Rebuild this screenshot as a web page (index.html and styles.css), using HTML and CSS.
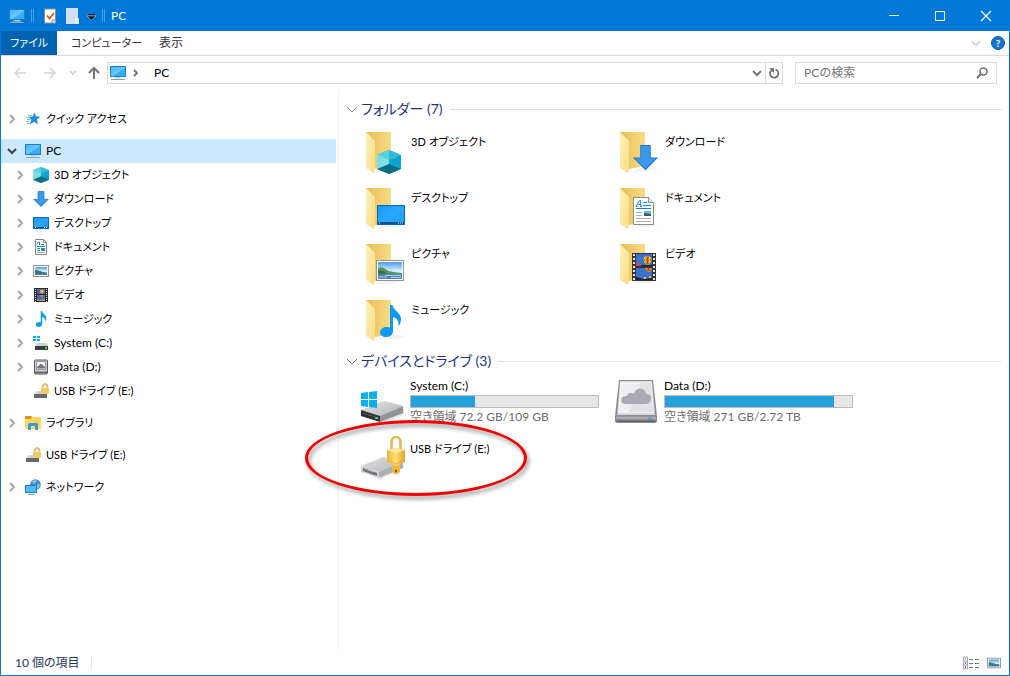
FILE: index.html
```html
<!DOCTYPE html>
<html lang="ja">
<head>
<meta charset="utf-8">
<meta name="viewport" content="width=device-width, initial-scale=1">
<title>PC</title>
<link rel="stylesheet" href="styles.css">
</head>
<body>
<svg class="defs" width="0" height="0" aria-hidden="true">
  <defs>
    <linearGradient id="g-screen" x1="0" y1="0" x2="1" y2="1"><stop offset="0" stop-color="#3fb4ff"/><stop offset=".55" stop-color="#6cc8ff"/><stop offset=".56" stop-color="#38acf8"/><stop offset="1" stop-color="#38acf8"/></linearGradient>
    <linearGradient id="g-desk" x1="0" y1="0" x2="1" y2="1"><stop offset="0" stop-color="#149bff"/><stop offset=".5" stop-color="#2aa6ff"/><stop offset="1" stop-color="#1b9bfa"/></linearGradient>
    <linearGradient id="g-back" x1="0" y1="0" x2="1" y2="0"><stop offset="0" stop-color="#e9bf55"/><stop offset="1" stop-color="#f7dc86"/></linearGradient>
    <linearGradient id="g-flap" x1="0" y1="0" x2="1" y2="1"><stop offset="0" stop-color="#fff0bd"/><stop offset="1" stop-color="#fbdc83"/></linearGradient>
    <linearGradient id="g-sky" x1="0" y1="0" x2="0" y2="1"><stop offset="0" stop-color="#4d9be8"/><stop offset=".5" stop-color="#d3ecfa"/><stop offset="1" stop-color="#e7f4fa"/></linearGradient>
    <linearGradient id="g-metal" x1="0" y1="0" x2="1" y2="1"><stop offset="0" stop-color="#e2e2e4"/><stop offset="1" stop-color="#b4b5b8"/></linearGradient>
    <linearGradient id="g-gold" x1="0" y1="0" x2="1" y2="0"><stop offset="0" stop-color="#e8b63e"/><stop offset=".45" stop-color="#ffdc78"/><stop offset="1" stop-color="#e3a72c"/></linearGradient>
    <linearGradient id="g-base" x1="0" y1="0" x2="0" y2="1"><stop offset="0" stop-color="#85858a"/><stop offset=".3" stop-color="#b8b8bd"/><stop offset="1" stop-color="#55555a"/></linearGradient>
    <symbol id="i-pc" viewBox="0 0 16 16">
      <rect x=".5" y="1.5" width="15" height="10" fill="url(#g-screen)" stroke="#1f7fb8"/>
      <rect x="6" y="12" width="4" height="1" fill="#9fc9de"/><path d="M1 14.5h14" stroke="#8fa5b2"/><path d="M4 13h8" stroke="#c3d9e4"/>
    </symbol>
    <symbol id="i-star" viewBox="0 0 16 16">
      <path d="M9.600 2l1.200 3.700 4 .2-3.200 2.500.9 4.400-3.200-2.400-4.200 2.500 1.700-4.200L3.700 6.200l4.200-.4z" fill="#1d8fe0" stroke="#1478c4" stroke-width=".5"/>
      <path d="M3 4.500h4M1.500 6.500h3M2 8.500h3M1 10.500h3M2 12.500h2" stroke="#6cc2f3"/>
    </symbol>
    <symbol id="i-cube" viewBox="0 0 24 24">
      <path d="M0 5l12-5 12 5v14l-12 5-12-5z" fill="#12a6c4"/><path d="M0 5l12-5 12 5-12 5z" fill="#59d3e2"/><path d="M0 5l12 5v14L0 19z" fill="#9ce8ec"/><path d="M0 5l12 5v4L0 19z" fill="#80dfe6"/><path d="M12 10l12-5v14l-12-5z" fill="#0aa5d0"/><path d="M0 19l12-5 12 5-12 5z" fill="#0a6e86"/><path d="M12 0L24 5l-12 5z" fill="#35bbd2"/>
    </symbol>
    <symbol id="i-down" viewBox="0 0 24 24"><path d="M7.500.5h9v12h6.500L12 23.500 1 12.500h6.500z" fill="#3b99ea" stroke="#2176c4"/></symbol>
    <symbol id="i-desk" viewBox="0 0 28 20"><rect x=".5" y=".5" width="27" height="19" fill="url(#g-desk)" stroke="#0b67ad"/><path d="M1 18h26" stroke="#07548f" stroke-width="2"/><path d="M2 18h1M21 18h1M23 18h1M25 18h1" stroke="#e9f6ff"/></symbol>
    <symbol id="i-desk-s" viewBox="0 0 16 16"><rect x=".5" y="2.500" width="15" height="11" fill="url(#g-desk)" stroke="#0b67ad"/><path d="M1 12.500h14" stroke="#07548f"/><path d="M2 12.500h1M11 12.500h1M13 12.500h1" stroke="#e9f6ff"/></symbol>
    <symbol id="i-doc" viewBox="0 0 21 28">
      <path d="M.5.500h15l5 5v22H.5z" fill="#fff" stroke="#8d8d8d"/><path d="M15.500.500v5h5" fill="#eee" stroke="#8d8d8d"/>
      <path d="M3 9.500L6.500 3.500h1L8 9.500M5 7.500h3M2.500 9.500h2M7 9.500h2" fill="none" stroke="#1687cf"/><path d="M10 5.500h4M10 8.500h8M3 11.500h15" stroke="#1687cf"/><path d="M3 15.500h6M3 18.500h6M3 21.500h15M3 24.500h15" stroke="#b0b0b0"/><rect x="11" y="14" width="7" height="5" fill="#78b4e4"/><path d="M11 16l7 1v2h-7z" fill="#315f70"/>
    </symbol>
    <symbol id="i-doc-s" viewBox="0 0 16 16"><path d="M2.500.500h8l3 3v12h-11z" fill="#fff" stroke="#858585"/><path d="M10.500.500v3h3" fill="none" stroke="#858585"/><path d="M4 5.500L5.500 3h1v3M4 7.500h8" fill="none" stroke="#1687cf"/><path d="M8 5.500h3M4 9.500h3M4 11.500h3" stroke="#1687cf"/><path d="M4 13.500h8" stroke="#999"/><rect x="8" y="9" width="4" height="3" fill="#3a83aa"/></symbol>
    <symbol id="i-pic" viewBox="0 0 28 21">
      <rect x=".5" y=".5" width="27" height="20" fill="#fff" stroke="#949494"/><rect x="2" y="2" width="24" height="17" fill="url(#g-sky)"/><path d="M2 8c4-2 6 0 9 2s9 2 15 3v2H2z" fill="#5c9564"/><path d="M2 10c4 0 7 2 10 4H2z" fill="#3c7449"/><path d="M2 14h24v5H2z" fill="#4f86b4"/><path d="M3 17h8M9 15.500h16M15 17.500h10" stroke="#a9cfe6" fill="none"/>
    </symbol>
    <symbol id="i-pic-s" viewBox="0 0 16 16"><rect x=".5" y="2.500" width="15" height="11" fill="#fff" stroke="#949494"/><rect x="2" y="4" width="12" height="8" fill="url(#g-sky)"/><path d="M2 7c3 0 6 2 12 2.500V11H2z" fill="#3c7661"/><path d="M2 10h12v2H2z" fill="#3f7ead"/></symbol>
    <symbol id="i-film" viewBox="0 0 24 28">
      <rect width="24" height="28" fill="#333"/><path d="M2 1v27M22 1v27" stroke="#e4e4e4" stroke-width="2" stroke-dasharray="2 2"/><rect x="4" y="1" width="16" height="12" fill="#3a70cf"/><rect x="4" y="15" width="16" height="12" fill="#3a70cf"/>
      <path d="M4 9l3 1 3 2v1H4z" fill="#be4d68"/><path d="M9 12h11v1H9z" fill="#182435"/><path d="M11.500 7a4 4 0 018 0q0 2-3 5h-2q-3-3-3-5z" fill="#efbf1f"/><path d="M15.500 3.500v8" stroke="#bd3b28" stroke-width="2"/><path d="M12.500 6v2M18.500 6v2" stroke="#4a952f"/><path d="M13 15h7l-2 4h-2z" fill="#e1a31e"/><path d="M16.500 15v3" stroke="#c92e2b" stroke-width="2"/><path d="M4 24l4 1 3 1 9-1v2H4z" fill="#182435"/><path d="M12 25h2M17 24h2" stroke="#f1c222" stroke-width="2"/>
    </symbol>
    <symbol id="i-film-s" viewBox="0 0 16 16"><rect x="1" y="1" width="14" height="14" fill="#292929"/><path d="M2.500 2v13M13.500 2v13" stroke="#ddd" stroke-dasharray="1 1"/><rect x="4" y="2" width="8" height="5" fill="#356dcb"/><rect x="4" y="8" width="8" height="6" fill="#356dcb"/><circle cx="9" cy="4.500" r="2" fill="#e8b128"/><path d="M7 8h4l-2 3z" fill="#db7330"/><path d="M4 12l3 1 5-1v2H4z" fill="#be9930"/><path d="M4 5h3v2H4z" fill="#b34057"/></symbol>
    <symbol id="i-note" viewBox="0 0 21 32"><path d="M10 0h2.500c.5 5 8.500 7.500 8.500 14 0 3-1 5-2.500 7.500.8-5-1.500-8.500-5.500-9.500v14c0 4-3.500 6-7 6-3.500 0-6-2-6-4.500C0 24 3.500 22 7 22c1 0 2 .2 3 .6z" fill="#0f9af0"/></symbol>
    <symbol id="i-drive-s" viewBox="0 0 16 16"><path d="M0 1h3v2H0zM4 1h3v2H4zM0 4h3v2H0zM4 4h3v2H4z" fill="#10a9e8"/><path d="M4 8h10l1 3H2z" fill="#d0d0d2"/><rect x="2" y="11" width="13" height="4" fill="#3b3e40"/><rect x="12" y="12" width="2" height="2" fill="#38d65a"/></symbol>
    <symbol id="i-data-s" viewBox="0 0 16 16"><rect x="1.500" y="1" width="13" height="14" rx="1" fill="#ccccd0" stroke="#5c5c60"/><rect x="3.500" y="2.500" width="9" height="8" fill="#efeff1" stroke="#9c9ca0"/><path d="M4 9c0-2 2-2 2-2 1-3 4-2 4 0 2 0 3 2 1 2.500H5z" fill="#73747b"/><path d="M2 13.500h12" stroke="#68686d" stroke-width="2"/></symbol>
    <symbol id="i-lock-s" viewBox="0 0 16 16"><path d="M4 8h11v3H1z" fill="#d1d1d2"/><rect x="1" y="11" width="13" height="4" fill="#66676a"/><path d="M9.500 5V3.500a2.500 2.500 0 015 0V5" fill="none" stroke="#dfb956" stroke-width="1.500"/><rect x="8" y="5" width="8" height="6" rx="1" fill="#f0cb69"/></symbol>
    <symbol id="i-lib" viewBox="0 0 16 16"><path d="M0 1h6l1 1h9v12H0z" fill="#ffd663"/><path d="M0 1h6l1 1-1 2H0z" fill="#d99b13"/><path d="M3 15V9.500Q3 8 4.500 8h7Q13 8 13 9.500V15h-3v-4H6v4z" fill="#3d98db"/></symbol>
    <symbol id="i-net" viewBox="0 0 16 16"><circle cx="10.500" cy="5.500" r="5.300" fill="#3f8fc6"/><path d="M7 3c1-2 4-2 5-1L9 5zM12 6l3-1c0 2-1 4-3 4z" fill="#8fc0dd"/><rect x=".5" y="6.500" width="11" height="7" fill="#4fbbfa" stroke="#1a80bd"/><path d="M3 15.500h7" stroke="#7a9caf"/></symbol>
    <symbol id="i-folder" viewBox="0 0 48 48"><path d="M15 44l20-1 11-3-14-2z" fill="#000" opacity=".05"/><path d="M6 4h25v34l-16 3-9-3z" fill="url(#g-back)"/><path d="M6 4l9 9v27l-1 5-8-5z" fill="url(#g-flap)"/></symbol>
    <symbol id="i-system" viewBox="0 0 48 48">
      <path d="M1 35l20-10 23 8v6l-22 8z" fill="#000" opacity=".1"/><path d="M1 34l24-9 18 5-23 10z" fill="url(#g-metal)"/><path d="M20 40l23-10v7L20 46z" fill="#929397"/><path d="M1 34l19 6v6L1 40z" fill="#2e3031"/><path d="M3 37l12 4" stroke="#595b5c"/><rect x="15" y="41" width="3" height="2" fill="#37e05e"/>
      <path d="M1 17l7-1v7H1zM9 16l8-1v8H9zM1 24h7v7l-7-1zM9 24h8v8l-8-1z" fill="#0aafec"/>
    </symbol>
    <symbol id="i-data" viewBox="0 0 48 48">
      <path d="M5 4h34l4 36v5q0 2-3 2H4q-3 0-3-2v-5z" fill="#8b8b90"/><path d="M6 5h32l3 34H3z" fill="#d9dade"/><path d="M7 7h30l2 29H5z" fill="#eeeef1" stroke="#fff"/><path d="M27 7h10l2 29H15z" fill="#e2e2e6"/><path d="M2 40h40v4q0 2-2 2H4q-2 0-2-2z" fill="url(#g-base)"/><circle cx="36" cy="43" r="1.500" fill="#70b4e9" stroke="#37678b" stroke-width=".5"/>
      <path d="M12 28c-7 0-6-9 1-8 1-4 6-3 7-2 1-7 11-7 12 0 7-1 7 10-1 10z" fill="#aaaab4"/>
    </symbol>
    <symbol id="i-usb" viewBox="0 0 48 48">
      <path d="M2 36l20-9 23 6-25 13z" fill="#000" opacity=".08"/><path d="M1 32l22-9 20 5-23 10z" fill="url(#g-metal)"/><path d="M19 38l24-10v6L19 44z" fill="#aeafb2"/><path d="M1 32l18 6v6L1 38z" fill="#d2d2d4"/><path d="M3 34l14 5v3L3 37z" fill="#707174"/><path d="M5 35l8 3" stroke="#a9a9ab"/>
      <path d="M31.500 17V8a4.500 5 0 019 0v9" fill="none" stroke="#e7ba50" stroke-width="2.600"/><path d="M32 30h8v8l-4 3-4-3z" fill="#eeb743"/><path d="M27 16l9-2 9 2v12l-9 4-9-4z" fill="url(#g-gold)"/><path d="M27 16l9-2 9 2-9 3z" fill="#ffe7a2"/><path d="M27 26l9 4 9-4" fill="none" stroke="#d9a63c" stroke-width=".7"/><circle cx="36" cy="37" r="1.200" fill="#7a5c20"/>
    </symbol>
    <symbol id="i-right" viewBox="0 0 16 16"><path d="M6 4l4 4-4 4" fill="none" stroke="currentColor" stroke-width="2"/></symbol>
    <symbol id="i-open" viewBox="0 0 16 16"><path d="M4 6l4 4 4-4" fill="none" stroke="currentColor" stroke-width="2"/></symbol>
    <symbol id="i-thin" viewBox="0 0 12 12"><path d="M1 4l5 5 5-5" fill="none" stroke="currentColor"/></symbol>
  </defs>
</svg>

<div class="window">
  <header class="titlebar">
    <svg class="icon16"><use href="#i-pc"/></svg>
    <span class="divider"></span>
    <button class="quick" aria-label="プロパティ"><svg class="icon16" viewBox="0 0 16 16"><rect x="2.500" y="1" width="11" height="14" fill="#fff" stroke="#8a8f96"/><path d="M10 15v-3h3" fill="#ddd" stroke="#999"/><path d="M5 7.500l2.500 3L12 5" fill="none" stroke="#e0591d" stroke-width="1.800"/></svg></button>
    <button class="quick" aria-label="新しいフォルダー"><svg class="icon16" viewBox="0 0 16 16"><path d="M2 0h12v9l1 2v5H2z" fill="#d3dff4"/><path d="M11 10h3v5h-3z" fill="#e8effb"/></svg></button>
    <button class="quick quick--menu" aria-label="カスタマイズ"><svg width="10" height="8" viewBox="0 0 10 8"><path d="M2 1.500h7" stroke="#000"/><path d="M1 3h9L5.500 7z" fill="#000" stroke="#9cccf4" stroke-width=".6"/></svg></button>
    <span class="divider divider--last"></span>
    <h1 class="title">PC</h1>
    <div class="controls">
      <button class="control" aria-label="最小化"><svg width="12" height="12"><path d="M1 5.500h10" stroke="#fff"/></svg></button>
      <button class="control" aria-label="最大化"><svg width="12" height="12"><rect x="1.500" y="1.500" width="9" height="9" fill="none" stroke="#fff"/></svg></button>
      <button class="control" aria-label="閉じる"><svg width="12" height="12"><path d="M1 1l10 10M11 1L1 11" stroke="#fff" stroke-width="1.200"/></svg></button>
    </div>
  </header>

  <div class="tabs">
    <button class="tab tab--file kana">ファイル</button>
    <button class="tab kana">コンピューター</button>
    <button class="tab tab--view">表示</button>
    <button class="collapse" aria-label="リボンの展開"><svg width="10" height="10" viewBox="0 0 12 12"><use href="#i-thin"/></svg></button>
    <button class="help" aria-label="ヘルプ">?</button>
  </div>

  <div class="toolbar">
    <button class="nav-btn" aria-label="戻る"><svg width="14" height="14"><path d="M13 7H2M7 2L2 7l5 5" fill="none" stroke="#d3d3d3" stroke-width="1.500"/></svg></button>
    <button class="nav-btn" aria-label="進む"><svg width="14" height="14"><path d="M1 7h11M7 2l5 5-5 5" fill="none" stroke="#d3d3d3" stroke-width="1.500"/></svg></button>
    <button class="nav-btn nav-btn--recent" aria-label="最近表示した場所"><svg width="8" height="8"><path d="M1 2l3 3 3-3" fill="none" stroke="#cfcfcf" stroke-width="1.500"/></svg></button>
    <button class="nav-btn nav-btn--up" aria-label="上へ"><svg width="14" height="14"><path d="M7 13V2M2 7l5-5 5 5" fill="none" stroke="#757575" stroke-width="2"/></svg></button>
    <div class="address">
      <svg class="icon16"><use href="#i-pc"/></svg>
      <svg class="icon16 crumb-arrow" viewBox="0 0 16 16"><path d="M6 5l3 3-3 3" fill="none" stroke="#777" stroke-width="2"/></svg>
      <a class="crumb" href="#pc">PC</a>
      <button class="address-btn address-btn--list" aria-label="履歴"><svg width="16" height="16"><use href="#i-open"/></svg></button>
      <button class="address-btn address-btn--refresh" aria-label="最新の情報に更新"><svg width="12" height="12"><path d="M3.500 3.300A4.200 4.200 0 107.500 2.500" fill="none" stroke="#6d6d6d" stroke-width="1.700"/><path d="M1 1.200h5V6z" fill="#6d6d6d"/></svg></button>
    </div>
    <div class="search">
      <input class="search-input" type="search" aria-label="PCの検索" placeholder="PCの検索">
      <button class="search-btn" aria-label="検索"><svg width="12" height="12"><circle cx="7.500" cy="4.500" r="3.500" fill="none" stroke="#6d6d6d" stroke-width="1.500"/><path d="M5 7l-4 4" stroke="#6d6d6d" stroke-width="2"/></svg></button>
    </div>
  </div>

  <div class="body">
    <nav class="sidebar">
      <div class="tree-group"><a class="node" href="#quick"><svg class="icon16 caret"><use href="#i-right"/></svg><svg class="icon16"><use href="#i-star"/></svg><span class="kana">クイック アクセス</span></a></div>
      <div class="tree-group">
        <a class="node node--active" href="#pc"><svg class="icon16 caret caret--open"><use href="#i-open"/></svg><svg class="icon16"><use href="#i-pc"/></svg><span>PC</span></a>
        <a class="node node--child" href="#3d"><svg class="icon16 caret"><use href="#i-right"/></svg><svg class="icon16"><use href="#i-cube"/></svg><span class="kana">3D オブジェクト</span></a>
        <a class="node node--child" href="#downloads"><svg class="icon16 caret"><use href="#i-right"/></svg><svg class="icon16"><use href="#i-down"/></svg><span class="kana">ダウンロード</span></a>
        <a class="node node--child" href="#desktop"><svg class="icon16 caret"><use href="#i-right"/></svg><svg class="icon16"><use href="#i-desk-s"/></svg><span class="kana">デスクトップ</span></a>
        <a class="node node--child" href="#documents"><svg class="icon16 caret"><use href="#i-right"/></svg><svg class="icon16"><use href="#i-doc-s"/></svg><span class="kana">ドキュメント</span></a>
        <a class="node node--child" href="#pictures"><svg class="icon16 caret"><use href="#i-right"/></svg><svg class="icon16"><use href="#i-pic-s"/></svg><span class="kana">ピクチャ</span></a>
        <a class="node node--child" href="#videos"><svg class="icon16 caret"><use href="#i-right"/></svg><svg class="icon16"><use href="#i-film-s"/></svg><span class="kana">ビデオ</span></a>
        <a class="node node--child" href="#music"><svg class="icon16 caret"><use href="#i-right"/></svg><svg class="icon16"><use href="#i-note"/></svg><span class="kana">ミュージック</span></a>
        <a class="node node--child" href="#c"><svg class="icon16 caret"><use href="#i-right"/></svg><svg class="icon16"><use href="#i-drive-s"/></svg><span>System (C:)</span></a>
        <a class="node node--child" href="#d"><svg class="icon16 caret"><use href="#i-right"/></svg><svg class="icon16"><use href="#i-data-s"/></svg><span>Data (D:)</span></a>
        <a class="node node--child" href="#e"><span class="icon16"></span><svg class="icon16"><use href="#i-lock-s"/></svg><span class="kana">USB ドライブ (E:)</span></a>
      </div>
      <div class="tree-group"><a class="node" href="#libraries"><svg class="icon16 caret"><use href="#i-right"/></svg><svg class="icon16"><use href="#i-lib"/></svg><span class="kana">ライブラリ</span></a></div>
      <div class="tree-group"><a class="node" href="#usb"><span class="icon16"></span><svg class="icon16"><use href="#i-lock-s"/></svg><span class="kana">USB ドライブ (E:)</span></a></div>
      <div class="tree-group"><a class="node" href="#network"><svg class="icon16 caret"><use href="#i-right"/></svg><svg class="icon16"><use href="#i-net"/></svg><span class="kana">ネットワーク</span></a></div>
    </nav>

    <main class="content">
      <section>
        <h2 class="group"><svg width="12" height="12"><use href="#i-thin"/></svg><span class="group-name">フォルダー (7)</span></h2>
        <div class="grid">
          <a class="tile" href="#3d"><svg class="icon48" viewBox="0 0 48 48"><use href="#i-folder"/><use href="#i-cube" x="17" y="22" width="24" height="24"/></svg><span class="label kana">3D オブジェクト</span></a>
          <a class="tile" href="#downloads"><svg class="icon48" viewBox="0 0 48 48"><use href="#i-folder"/><use href="#i-down" x="19" y="17" width="25" height="25"/></svg><span class="label kana">ダウンロード</span></a>
          <a class="tile" href="#desktop"><svg class="icon48" viewBox="0 0 48 48"><use href="#i-folder"/><use href="#i-desk" x="17" y="21" width="28" height="20"/></svg><span class="label kana">デスクトップ</span></a>
          <a class="tile" href="#documents"><svg class="icon48" viewBox="0 0 48 48"><use href="#i-folder"/><use href="#i-doc" x="19" y="13" width="21" height="28"/></svg><span class="label kana">ドキュメント</span></a>
          <a class="tile" href="#pictures"><svg class="icon48" viewBox="0 0 48 48"><use href="#i-folder"/><use href="#i-pic" x="16" y="20" width="28" height="21"/></svg><span class="label kana">ピクチャ</span></a>
          <a class="tile" href="#videos"><svg class="icon48" viewBox="0 0 48 48"><use href="#i-folder"/><use href="#i-film" x="18" y="13" width="24" height="28"/></svg><span class="label kana">ビデオ</span></a>
          <a class="tile" href="#music"><svg class="icon48" viewBox="0 0 48 48"><use href="#i-folder"/><use href="#i-note" x="20" y="9" width="21" height="32"/></svg><span class="label kana">ミュージック</span></a>
        </div>
      </section>
      <section>
        <h2 class="group"><svg width="12" height="12"><use href="#i-thin"/></svg><span class="group-name">デバイスとドライブ (3)</span></h2>
        <div class="grid grid--drives">
          <a class="drive" href="#c"><svg class="icon48"><use href="#i-system"/></svg><span class="drive-info"><span class="label">System (C:)</span><span class="usage" role="meter" aria-label="使用領域" aria-valuenow="34" aria-valuemin="0" aria-valuemax="100"><span class="used" style="width:34%"></span></span><span class="free">空き領域 72.2 GB/109 GB</span></span></a>
          <a class="drive" href="#d"><svg class="icon48"><use href="#i-data"/></svg><span class="drive-info"><span class="label">Data (D:)</span><span class="usage" role="meter" aria-label="使用領域" aria-valuenow="90" aria-valuemin="0" aria-valuemax="100"><span class="used" style="width:90.5%"></span></span><span class="free">空き領域 271 GB/2.72 TB</span></span></a>
          <a class="drive drive--plain" href="#e"><svg class="icon48"><use href="#i-usb"/></svg><span class="drive-info"><span class="label kana">USB ドライブ (E:)</span></span><span class="marker"></span></a>
        </div>
      </section>
    </main>
  </div>

  <footer class="status">
    <span class="count">10 個の項目</span>
    <button class="view" aria-label="詳細"><svg width="16" height="14"><path d="M.5 1h4v12h-4zM0 5h5M0 9h5" fill="none" stroke="#a5a5a5"/><path d="M6 3.500h4M12 3.500h4M6 7.500h4M12 7.500h4M6 11.500h4M12 11.500h4" stroke="#777"/><path d="M2 3h1" stroke="#555"/><path d="M2 7h1" stroke="#2993e5" stroke-width="2"/><path d="M2 11h1" stroke="#d12a1e" stroke-width="2"/></svg></button>
    <button class="view" aria-label="大アイコン"><svg width="14" height="14" viewBox="0 1 16 14"><use href="#i-pic-s" width="16" height="16"/></svg></button>
  </footer>
</div>
</body>
</html>
```
FILE: styles.css
```css
* { box-sizing: border-box; }

body {
  margin: 0;
  font: 12px/18px Lato, "Noto Sans CJK JP", sans-serif;
  color: #000;
  background: #fff;
}

a { color: inherit; text-decoration: none; }

button {
  display: flex;
  align-items: center;
  justify-content: center;
  padding: 0;
  border: 0;
  background: none;
  color: inherit;
  font: inherit;
}

svg { display: block; flex: none; }

.defs { position: absolute; }
.icon16 { width: 16px; height: 16px; flex: none; }
.icon48 { width: 48px; height: 48px; }
.kana { font-size: 11px; font-feature-settings: "palt"; }

.window {
  display: flex;
  flex-direction: column;
  min-height: 100vh;
  border: 1px solid #0078d7;
  border-top: 0;
}

.titlebar {
  display: flex;
  align-items: center;
  height: 31px;
  padding-left: 8px;
  background: #0078d7;
  color: #fff;
}
.divider {
  width: 3px;
  height: 13px;
  margin: 0 7px 0 6px;
  border: solid #4f9fe0;
  border-width: 0 1px;
}
.divider--last { margin-right: 6px; }
.quick { margin-right: 6px; }
.quick:first-of-type { margin-left: 1px; }
.quick--menu { margin: 2px 0 0; }
.title { margin: 0; font-size: 12px; font-weight: 400; }
.controls { display: flex; margin-left: auto; align-self: stretch; }
.control { width: 46px; }

.tabs {
  display: flex;
  align-items: center;
  height: 25px;
  padding-right: 4px;
  border-bottom: 1px solid #dadbdc;
  color: #333;
}
.tab { align-self: stretch; padding: 0 0 0 14px; }
.tab--file { width: 56px; padding: 0; background: #0063b1; color: #fff; }
.tab--view { padding-left: 17px; font-size: 12px; }
.collapse { margin-left: auto; margin-right: 10px; color: #888; }
.help {
  width: 14px;
  height: 14px;
  border: 1px solid #0a5ca8;
  border-radius: 50%;
  background: #1677cd;
  color: #fff;
  font-size: 10px;
  font-weight: 700;
  line-height: 12px;
}

.toolbar {
  display: flex;
  align-items: center;
  height: 34px;
  padding: 0 12px;
}
.nav-btn { width: 14px; height: 20px; margin-right: 16px; }
.nav-btn--recent { width: 8px; margin: 0 10px 0 -4px; }
.nav-btn--up { margin-right: 6px; }
.address {
  display: flex;
  flex: 1;
  align-items: center;
  height: 22px;
  padding-left: 2px;
  border: 1px solid #d9d9d9;
}
.crumb-arrow { margin: 0 10px 0 2px; }
.crumb { margin-right: auto; }
.address-btn { align-self: stretch; width: 16px; color: #777; }
.address-btn--refresh { width: 17px; border-left: 1px solid #d9d9d9; }
.search {
  display: flex;
  width: 202px;
  height: 22px;
  margin-left: 12px;
  padding: 0 8px;
  border: 1px solid #d9d9d9;
}
.search-input {
  flex: 1;
  min-width: 0;
  padding: 0;
  border: 0;
  outline: 0;
  background: none;
  font: inherit;
}
.search-input::placeholder { color: #757575; }

.body { display: flex; flex: 1; }

.sidebar {
  flex: 0 0 338px;
  padding: 17px 2px 0 0;
  border-right: 1px solid #f3f3f3;
}
.tree-group { margin-bottom: 8px; }
.node {
  display: flex;
  align-items: center;
  gap: 5px;
  height: 24px;
  padding-left: 3px;
}
.node--child { padding-left: 11px; }
.node--active { background: #cce8ff; }
.caret { color: #a6a6a6; }
.caret--open { color: #404040; }

.content { flex: 1; min-width: 0; padding: 8px 7px 0; }
.group {
  display: flex;
  align-items: center;
  gap: 3px;
  height: 22px;
  margin: 0;
  color: #808080;
  font-size: 14px;
  font-weight: 400;
  font-feature-settings: "palt";
}
.group-name { color: #1e3287; }
.group::after {
  content: "";
  flex: 1;
  height: 1px;
  margin-left: 4px;
  background: #e2e2e2;
}
.grid {
  display: grid;
  grid-template-columns: repeat(auto-fill, 254px);
  padding: 6px 0 0 14px;
}
.grid--drives { padding-top: 4px; }
.tile {
  display: flex;
  gap: 3px;
  height: 56px;
  padding-top: 2px;
}
.label { line-height: 18px; }
.tile .label { padding-top: 5px; }

.drive {
  position: relative;
  display: flex;
  gap: 2px;
  height: 58px;
}
.drive-info { display: flex; flex-direction: column; width: 189px; padding-top: 1px; }
.drive--plain .drive-info { padding-top: 6px; }
.usage {
  height: 13px;
  border: 1px solid #bcbcbc;
  background: #e6e6e6;
}
.used { display: block; height: 100%; background: #26a0da; }
.free { color: #6d6d6d; font-feature-settings: "palt"; }
.marker {
  position: absolute;
  top: -14px;
  left: -55px;
  width: 222px;
  height: 76px;
  border: 3px solid #f00000;
  border-radius: 50%;
  filter: drop-shadow(2px 3px 2px rgba(0, 0, 0, .45));
  pointer-events: none;
}

.status {
  display: flex;
  align-items: center;
  gap: 8px;
  height: 24px;
  padding: 0 8px 0 14px;
  color: #1e395b;
}
.count {
  margin-right: auto;
  padding-right: 11px;
  border-right: 1px solid #e9e9e9;
  line-height: 14px;
  font-feature-settings: "palt";
}
```
